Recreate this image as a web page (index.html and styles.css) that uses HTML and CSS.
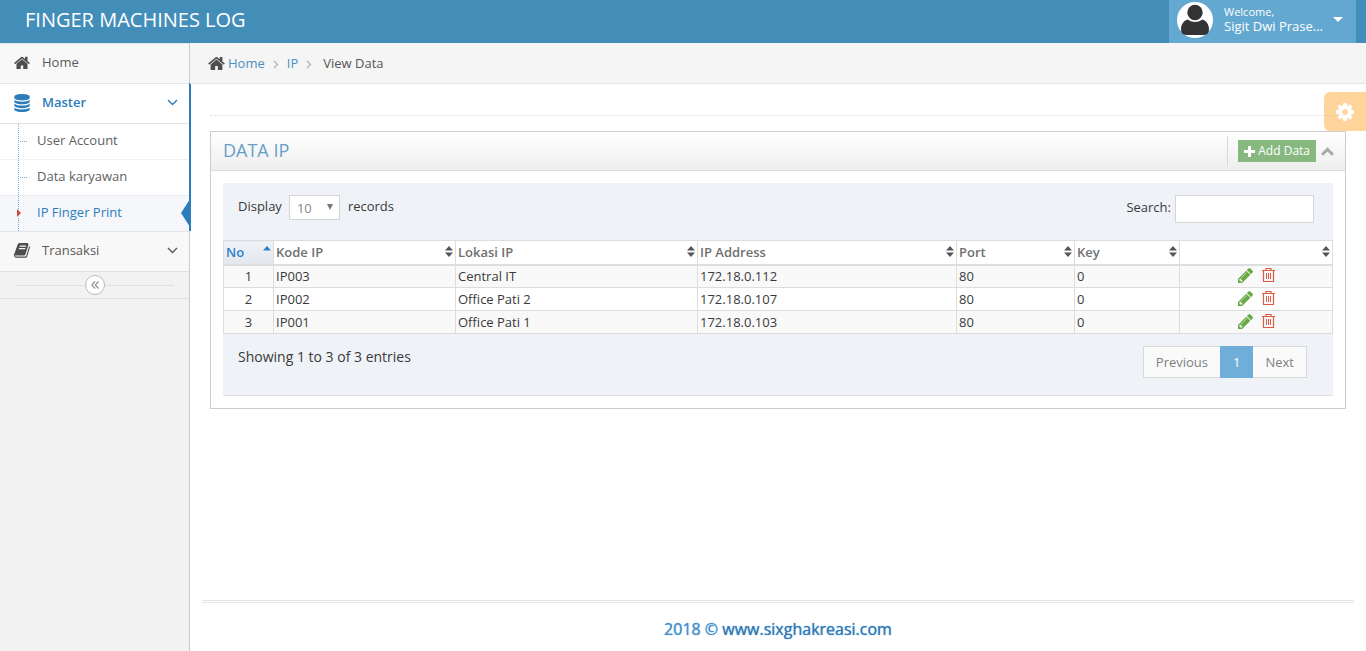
FILE: index.html
```html
<!DOCTYPE html>
<html lang="en">
<head>
<meta charset="utf-8">
<title>Finger Machines Log</title>
<meta name="viewport" content="width=device-width, initial-scale=1">
<link rel="stylesheet" href="styles.css">
</head>
<body>
<svg class="sprite" aria-hidden="true">
  <symbol id="i-home" viewBox="64 200 1664 1400"><path d="M1472 992v480q0 26-19 45t-45 19h-384v-384h-256v384h-384q-26 0-45-19t-19-45v-480q0-1 .5-3t.5-3l575-474 575 474q1 2 1 6zm223-69l-62 74q-8 9-21 11h-3q-13 0-21-7l-692-577-692 577q-12 8-24 7-13-2-21-11l-62-74q-8-10-7-23.500t11-21.500l719-599q32-26 76-26t76 26l244 204v-195q0-14 9-23t23-9h192q14 0 23 9t9 23v408l219 182q10 8 11 21.500t-7 23.500z"/></symbol>
  <symbol id="i-database" viewBox="128 0 1536 1792"><path d="M896 768q237 0 443-43t325-127v170q0 69-103 128t-280 93.500-385 34.500-385-34.500-280-93.500-103-128v-170q119 84 325 127t443 43zm0 768q237 0 443-43t325-127v170q0 69-103 128t-280 93.500-385 34.500-385-34.500-280-93.500-103-128v-170q119 84 325 127t443 43zm0-384q237 0 443-43t325-127v170q0 69-103 128t-280 93.500-385 34.500-385-34.500-280-93.500-103-128v-170q119 84 325 127t443 43zm0-1152q208 0 385 34.500t280 93.500 103 128v128q0 69-103 128t-280 93.500-385 34.500-385-34.500-280-93.500-103-128v-128q0-69 103-128t280-93.500 385-34.500z"/></symbol>
  <symbol id="i-book" viewBox="64 128 1670 1540"><path d="M1703 478q40 57 18 129l-275 906q-19 64-76.500 107.500t-122.500 43.500h-923q-77 0-148.500-53.500t-99.500-131.500q-24-67-2-127 0-4 3-27t4-37q1-8-3-21.500t-3-19.500q2-11 8-21t16.500-23.500 16.500-23.500q23-38 45-91.500t30-91.500q3-10 .5-30t-.5-28q3-11 17-28t17-23q21-36 42-92t25-90q1-9-2.500-32t.5-28q4-13 22-30.500t22-22.500q19-26 42.500-84.500t27.500-96.500q1-8-3-25.500t-2-26.500q2-8 9-18t18-23 17-21q8-12 16.500-30.500t15-35 16-36 19.500-32 26.500-23.500 36-11.500 47.500 5.500l-1 3q38-9 51-9h761q74 0 114 56t18 130l-274 906q-36 119-71.500 153.500t-128.500 34.500h-869q-27 0-38 15-11 16-1 43 24 70 144 70h923q29 0 56-15.500t35-41.500l300-987q7-22 5-57 38 15 59 43zm-1064 2q-4 13 2 22.500t20 9.500h608q13 0 25.500-9.500t16.500-22.500l21-64q4-13-2-22.500t-20-9.500h-608q-13 0-25.500 9.500t-16.500 22.500zm-83 256q-4 13 2 22.500t20 9.500h608q13 0 25.500-9.500t16.500-22.500l21-64q4-13-2-22.500t-20-9.500h-608q-13 0-25.500 9.500t-16.500 22.500z"/></symbol>
  <symbol id="i-cog" viewBox="128 128 1536 1536"><path d="M1152 896q0-106-75-181t-181-75-181 75-75 181 75 181 181 75 181-75 75-181zm512-109v222q0 12-8 23t-20 13l-185 28q-19 54-39 91 35 50 107 138 10 12 10 25t-9 23q-27 37-99 108t-94 71q-12 0-26-9l-138-108q-44 23-91 38-16 136-29 186-7 28-36 28h-222q-14 0-24.500-8.500t-11.500-21.500l-28-184q-49-16-90-37l-141 107q-10 9-25 9-14 0-25-11-126-114-165-168-7-10-7-23 0-12 8-23 15-21 51-66.500t54-70.500q-27-50-41-99l-183-27q-13-2-21-12.500t-8-23.500v-222q0-12 8-23t19-13l186-28q14-46 39-92-40-57-107-138-10-12-10-24 0-10 9-23 26-36 98.500-107.500t94.500-71.500q13 0 26 10l138 107q44-23 91-38 16-136 29-186 7-28 36-28h222q14 0 24.500 8.500t11.500 21.500l28 184q49 16 90 37l142-107q9-9 24-9 13 0 25 10 129 119 165 170 7 8 7 22 0 12-8 23-15 21-51 66.500t-54 70.500q26 50 41 98l183 28q13 2 21 12.500t8 23.500z"/></symbol>
  <symbol id="i-pencil" viewBox="128 149 1515 1515"><path d="M491 1536l91-91-235-235-91 91v107h128v128h107zm523-928q0-22-22-22-10 0-17 7l-542 542q-7 7-7 17 0 22 22 22 10 0 17-7l542-542q7-7 7-17zm-54-192l416 416-832 832h-416v-416zm683 96q0 53-37 90l-166 166-416-416 166-165q36-38 90-38 53 0 91 38l235 234q37 39 37 91z"/></symbol>
  <symbol id="i-trash" viewBox="0 0 13 14"><path d="M0 2.500h13M4 2.500V.500h5v2M1.500 2.500v11h10v-11" fill="none" stroke="currentColor" stroke-width="1.200"/><path d="M4.500 5v6M6.500 5v6M8.500 5v6" fill="none" stroke="currentColor"/></symbol>
  <symbol id="i-down" viewBox="0 0 11 7"><path d="M1 1l4.500 4.500L10 1" fill="none" stroke="currentColor" stroke-width="1.400"/></symbol>
  <symbol id="i-right" viewBox="0 0 6 9"><path d="M1 1l3.500 3.500L1 8" fill="none" stroke="currentColor" stroke-width="1.400"/></symbol>
  <symbol id="i-up" viewBox="0 0 12 8"><path d="M1 7l5-5 5 5" fill="none" stroke="currentColor" stroke-width="2.800"/></symbol>
  <symbol id="i-plus" viewBox="0 0 11 11"><path d="M4 0h3v4h4v3H7v4H4V7H0V4h4z"/></symbol>
  <symbol id="i-left2" viewBox="0 0 8 8"><path d="M4 .500L.800 4 4 7.500M7.500 .500L4.300 4l3.200 3.500" fill="none" stroke="currentColor" stroke-width="1.300"/></symbol>
  <symbol id="i-sort" viewBox="0 0 8 11"><path d="M4 0l4 4.500H0zM4 11l4-4.500H0z"/></symbol>
  <symbol id="i-asc" viewBox="0 0 8 11"><path d="M4 0l4 4.500H0z"/></symbol>
  <symbol id="i-caret" viewBox="0 0 10 5"><path d="M0 0h10L5 5z"/></symbol>
  <symbol id="i-tri" viewBox="0 0 6 6"><path d="M0 0h6L3 6z"/></symbol>
  <symbol id="i-user" viewBox="0 0 36 36"><circle cx="18" cy="18" r="18" fill="#fff"/><circle cx="18" cy="10.500" r="7.700" fill="#333"/><path d="M10.500 17.500Q18 22.500 25.500 17.500C30 19 32 23 32 27.500Q32 33 26 33H10Q4 33 4 27.500C4 23 6 19 10.500 17.500z" fill="#333"/></symbol>
</svg>

<header class="navbar">
  <a class="brand" href="#">FINGER MACHINES LOG</a>
  <button class="user" type="button">
    <svg class="avatar"><use href="#i-user"/></svg>
    <span class="user-info"><small>Welcome,</small><span>Sigit Dwi Prase...</span></span>
    <svg class="caret"><use href="#i-caret"/></svg>
  </button>
</header>

<div class="container">
  <nav class="sidebar" aria-label="Main">
    <ul class="menu">
      <li><a class="item" href="#"><svg class="menu-icon home"><use href="#i-home"/></svg><span>Home</span></a></li>
      <li class="open">
        <a class="item" href="#"><svg class="menu-icon db"><use href="#i-database"/></svg><span class="heavy">Master</span><svg class="arrow"><use href="#i-down"/></svg></a>
        <ul class="submenu">
          <li><a href="#">User Account</a></li>
          <li><a href="#">Data karyawan</a></li>
          <li class="active"><a href="#">IP Finger Print</a></li>
        </ul>
      </li>
      <li><a class="item" href="#"><svg class="menu-icon book"><use href="#i-book"/></svg><span>Transaksi</span><svg class="arrow"><use href="#i-down"/></svg></a></li>
    </ul>
    <div class="collapse"><button type="button" aria-label="Collapse sidebar"><svg><use href="#i-left2"/></svg></button></div>
  </nav>

  <div class="main">
    <nav class="breadcrumbs" aria-label="Breadcrumb">
      <svg class="home-icon"><use href="#i-home"/></svg>
      <a href="#">Home</a>
      <svg class="sep"><use href="#i-right"/></svg>
      <a href="#">IP</a>
      <svg class="sep"><use href="#i-right"/></svg>
      <span class="current">View Data</span>
    </nav>

    <button class="settings" type="button" aria-label="Settings"><svg><use href="#i-cog"/></svg></button>

    <main class="content">
      <div class="page-header"></div>
      <section class="widget">
        <div class="widget-header">
          <h1>DATA IP</h1>
          <div class="toolbar">
            <button class="add" type="button"><svg><use href="#i-plus"/></svg><span>Add Data</span></button>
            <button class="fold" type="button" aria-label="Collapse"><svg><use href="#i-up"/></svg></button>
          </div>
        </div>
        <div class="widget-body">
          <div class="panel">
            <div class="controls">
              <div class="length">
                <label for="len">Display</label>
                <span class="select"><select id="len"><option>10</option><option>25</option><option>50</option></select><svg class="tri" aria-hidden="true"><use href="#i-tri"/></svg></span>
                <span>records</span>
              </div>
              <div class="search"><label for="q">Search:</label><input id="q" type="search"></div>
            </div>
            <table class="data">
              <colgroup><col class="c1"><col class="c2"><col class="c3"><col class="c4"><col class="c5"><col class="c6"><col class="c7"></colgroup>
              <thead><tr>
                <th class="sorted"><div><span>No</span><svg><use href="#i-asc"/></svg></div></th>
                <th><div><span>Kode IP</span><svg><use href="#i-sort"/></svg></div></th>
                <th><div><span>Lokasi IP</span><svg><use href="#i-sort"/></svg></div></th>
                <th><div><span>IP Address</span><svg><use href="#i-sort"/></svg></div></th>
                <th><div><span>Port</span><svg><use href="#i-sort"/></svg></div></th>
                <th><div><span>Key</span><svg><use href="#i-sort"/></svg></div></th>
                <th><div><span></span><svg><use href="#i-sort"/></svg></div></th>
              </tr></thead>
              <tbody>
                <tr><td class="num">1</td><td>IP003</td><td>Central IT</td><td>172.18.0.112</td><td>80</td><td>0</td><td><div class="actions"><a class="edit" href="#" aria-label="Edit"><svg><use href="#i-pencil"/></svg></a><a class="del" href="#" aria-label="Delete"><svg><use href="#i-trash"/></svg></a></div></td></tr>
                <tr><td class="num">2</td><td>IP002</td><td>Office Pati 2</td><td>172.18.0.107</td><td>80</td><td>0</td><td><div class="actions"><a class="edit" href="#" aria-label="Edit"><svg><use href="#i-pencil"/></svg></a><a class="del" href="#" aria-label="Delete"><svg><use href="#i-trash"/></svg></a></div></td></tr>
                <tr><td class="num">3</td><td>IP001</td><td>Office Pati 1</td><td>172.18.0.103</td><td>80</td><td>0</td><td><div class="actions"><a class="edit" href="#" aria-label="Edit"><svg><use href="#i-pencil"/></svg></a><a class="del" href="#" aria-label="Delete"><svg><use href="#i-trash"/></svg></a></div></td></tr>
              </tbody>
            </table>
            <div class="table-footer">
              <div class="info">Showing 1 to 3 of 3 entries</div>
              <div class="pages"><a href="#">Previous</a><a class="on" href="#" aria-current="page">1</a><a href="#">Next</a></div>
            </div>
          </div>
        </div>
      </section>
    </main>

    <footer class="footer"><span class="year">2018 ©</span> <a href="#">www.sixghakreasi.com</a></footer>
  </div>
</div>
</body>
</html>
```
FILE: styles.css
```css
* { box-sizing: border-box; }
body {
  margin: 0;
  min-height: 100vh;
  display: flex;
  flex-direction: column;
  font: 13px/20px "Open Sans", "Noto Sans", sans-serif;
  color: #393939;
  background: #fff;
}
a { color: inherit; text-decoration: none; }
button, input, select { font: inherit; margin: 0; }
button { border: 0; padding: 0; cursor: pointer; }
ul { list-style: none; margin: 0; padding: 0; }
svg { display: block; fill: currentColor; flex: none; }
.sprite { position: absolute; width: 0; height: 0; }

.navbar {
  height: 43px;
  display: flex;
  justify-content: space-between;
  align-items: flex-start;
  padding: 0 10px 0 25px;
  background: #438eb9;
  color: #fff;
}
.brand { font-size: 20px; line-height: 40px; }
.user {
  height: 43px;
  width: 187px;
  padding: 0 13px 4px 8px;
  display: flex;
  align-items: center;
  background: #62a8d1;
  color: #fff;
  text-align: left;
}
.avatar { width: 36px; height: 36px; margin-right: 11px; }
.user-info { flex: 1; padding-bottom: 2px; line-height: 14px; white-space: nowrap; }
.user-info small { display: block; font-size: 11px; line-height: 15px; }
.caret { width: 10px; height: 5px; }

.container { flex: 1; display: flex; }
.sidebar {
  width: 190px;
  flex: none;
  background: #f2f2f2;
  border-right: 1px solid #ccc;
  color: #585858;
}
.item {
  height: 40px;
  display: flex;
  align-items: center;
  padding: 0 11px 2px 14px;
  border-top: 1px solid #e5e5e5;
  background: #f8f8f8;
}
.item span { flex: 1; padding-bottom: 2px; }
.menu-icon { width: 16px; height: 18px; margin-right: 12px; }
.menu-icon.home { height: 14px; }
.menu-icon.book { height: 15px; }
.home, .book, .home-icon { color: #4d4d4d; }
.arrow { width: 11px; height: 7px; }
.open { position: relative; color: #2b7dbc; }
.open::after {
  content: "";
  position: absolute;
  top: 0;
  bottom: 0;
  right: -2px;
  width: 2px;
  background: #2b7dbc;
}
.open .item { background: #fff; }
.heavy { font-weight: 600; }
.submenu {
  position: relative;
  border-top: 1px solid #e5e5e5;
  background: #fff;
  color: #616161;
}
.submenu::before {
  content: "";
  position: absolute;
  z-index: 1;
  top: 0;
  bottom: 0;
  left: 18px;
  border-left: 1px dotted #7aadd6;
}
.submenu li { position: relative; border-top: 1px dotted #e4e4e4; }
.submenu li:first-child { border-top: 0; }
.submenu a { display: block; height: 35px; line-height: 33px; padding-left: 37px; }
.submenu li::before {
  content: "";
  position: absolute;
  left: 20px;
  top: 17px;
  width: 7px;
  border-top: 1px dotted #7aadd6;
}
.submenu .active { background: #f5f7fa; color: #2b7dbc; }
.submenu .active::before {
  z-index: 2;
  left: 17px;
  top: 13px;
  width: 0;
  border: 4px solid transparent;
  border-left-color: #c84c3c;
  border-right: 0;
  background: #f5f7fa;
}
.submenu .active::after {
  content: "";
  position: absolute;
  right: -1px;
  top: 3px;
  border: 14px solid transparent;
  border-left: 0;
  border-right: 9px solid #2b7dbc;
}
.collapse {
  height: 28px;
  border: solid #e0e0e0;
  border-width: 1px 0;
  display: flex;
  align-items: center;
  padding: 0 15px;
}
.collapse::before, .collapse::after { content: ""; flex: 1; height: 1px; background: #e0e0e0; }
.collapse button {
  width: 20px;
  height: 20px;
  border: 1px solid #bbb;
  border-radius: 50%;
  background: #fff;
  color: #999;
  display: flex;
  align-items: center;
  justify-content: center;
}
.collapse svg { width: 8px; height: 8px; }

.main { position: relative; flex: 1; min-width: 0; display: flex; flex-direction: column; }
.breadcrumbs {
  height: 41px;
  display: flex;
  align-items: center;
  padding: 0 18px;
  border-bottom: 1px solid #e5e5e5;
  background: #f5f5f5;
}
.breadcrumbs a { color: #4c8fbd; }
.home-icon { width: 17px; height: 15px; margin-right: 3px; }
.sep { width: 6px; height: 9px; margin: 2px 8px 0; color: #b2b6bf; }
.current { margin-left: 3px; color: #555; }
.settings {
  position: absolute;
  z-index: 1;
  top: 49px;
  right: 0;
  width: 42px;
  height: 39px;
  padding-left: 12px;
  border-radius: 6px 0 0 6px;
  background: #ffb44b;
  opacity: .55;
  color: #fff;
}
.settings svg { width: 18px; height: 18px; }
.content { flex: 1; padding: 8px 20px 24px; }
.page-header { height: 24px; margin-bottom: 15px; border-bottom: 1px dotted #ddd; }
.widget { border: 1px solid #ccc; }
.widget-header {
  height: 39px;
  display: flex;
  justify-content: space-between;
  align-items: center;
  padding: 0 11px 0 12px;
  border-bottom: 1px solid #ddd;
  background: linear-gradient(#fff, #eee);
}
.widget-header h1 { margin: 0; padding-bottom: 2px; font-size: 18px; line-height: 36px; font-weight: 400; color: #669fc7; }
.toolbar { height: 31px; display: flex; align-items: center; padding-left: 10px; border-left: 1px solid #d9d9d9; }
.add {
  height: 22px;
  display: flex;
  align-items: center;
  gap: 3px;
  padding: 0 6px;
  background: #87b87f;
  color: #fff;
  font-size: 12px;
}
.add svg { width: 11px; height: 11px; }
.fold { background: none; margin-left: 5px; color: #aaa; }
.fold svg { width: 13px; height: 9px; }
.widget-body { padding: 12px; }
.panel { background: #eff3f8; border-bottom: 1px solid #e0e0e0; }
.controls { height: 57px; display: flex; justify-content: space-between; padding: 12px 19px 0 15px; }
.length { display: flex; gap: 7px; line-height: 22px; }
.select { position: relative; margin-right: 1px; }
.select select {
  display: block;
  width: 51px;
  height: 25px;
  padding: 0 7px;
  border: 1px solid #d5d5d5;
  border-radius: 0;
  appearance: none;
  background: #fff;
  color: #858585;
}
.tri { position: absolute; right: 7px; top: 9px; width: 6px; height: 6px; color: #777; pointer-events: none; }
.search { display: flex; gap: 4px; line-height: 24px; }
.search input { width: 139px; height: 28px; border: 1px solid #d5d5d5; background: #fff; appearance: none; padding: 0 6px; }

.data { width: calc(100% - 1px); table-layout: fixed; border-collapse: collapse; background: #fff; }
.c1 { width: 50px; } .c2 { width: 182px; } .c3 { width: 242px; } .c4 { width: 259px; }
.c5 { width: 118px; } .c6 { width: 105px; } .c7 { width: 153px; }
.data th, .data td { border: 1px solid #ddd; padding: 0 2px; text-align: left; }
.data td { height: 23px; }
.data th { height: 24px; border-bottom-width: 2px; font-weight: 600; color: #707070; }
.data th div { display: flex; justify-content: space-between; align-items: center; }
.data th svg { width: 8px; height: 11px; margin-bottom: 2px; color: #555; }
.data th.sorted { background: linear-gradient(#eff3f8, #e3e7ed); color: #307ecc; }
.data th.sorted svg { color: #307ecc; }
.data tbody tr:nth-child(odd) { background: #f9f9f9; }
.data .num { text-align: center; }
.actions { display: flex; justify-content: center; align-items: center; gap: 9px; padding-bottom: 2px; }
.edit { color: #69aa46; }
.edit svg { width: 15px; height: 15px; }
.del { color: #dd5a43; }
.del svg { width: 13px; height: 14px; }
.table-footer { height: 61px; display: flex; justify-content: space-between; padding: 12px 26px 0 15px; }
.info { font-size: 14px; line-height: 22px; }
.pages { display: flex; height: 32px; line-height: 31px; color: #808080; }
.pages a { border: 1px solid #d9d9d9; background: #fafafa; padding: 0 12px; }
.pages a.on { border-color: #6faed9; background: #6faed9; color: #fff; margin: 0 -1px; position: relative; }

.footer {
  height: 51px;
  margin: 0 12px;
  border-top: 3px double #e5e5e5;
  font-size: 16px;
  line-height: 52px;
  text-align: center;
  text-shadow: 0 0 1px currentColor;
  color: #337ab7;
}
.year { color: #478fca; }
```
